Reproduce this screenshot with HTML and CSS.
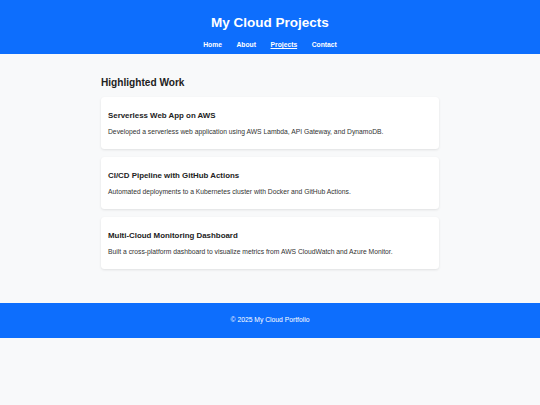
FILE: index.html
```html
<!DOCTYPE html>
<html lang="en">
<head>
<meta charset="utf-8">
<title>My Cloud Projects</title>
<link rel="stylesheet" href="styles.css">
</head>
<body>
<header class="site-header">
  <h1 class="site-title">My Cloud Projects</h1>
  <nav class="site-nav">
    <a class="nav-link" href="#">Home</a>
    <a class="nav-link" href="#">About</a>
    <a class="nav-link active" href="#">Projects</a>
    <a class="nav-link" href="#">Contact</a>
  </nav>
</header>
<main class="content">
  <h2 class="section-title">Highlighted Work</h2>
  <article class="card">
    <h3 class="card-title">Serverless Web App on AWS</h3>
    <p class="card-text">Developed a serverless web application using AWS Lambda, API Gateway, and DynamoDB.</p>
  </article>
  <article class="card">
    <h3 class="card-title">CI/CD Pipeline with GitHub Actions</h3>
    <p class="card-text">Automated deployments to a Kubernetes cluster with Docker and GitHub Actions.</p>
  </article>
  <article class="card">
    <h3 class="card-title">Multi-Cloud Monitoring Dashboard</h3>
    <p class="card-text">Built a cross-platform dashboard to visualize metrics from AWS CloudWatch and Azure Monitor.</p>
  </article>
</main>
<footer class="site-footer">
  <p class="footer-text">&copy; 2025 My Cloud Portfolio</p>
</footer>
</body>
</html>
```
FILE: styles.css
```css
html {
  background: #f8f9fa;
}
body {
  margin: 0;
  font-family: "Liberation Sans", Arial, sans-serif;
  background: #f8f9fa;
  color: #333;
  font-size: 6.75px;
}
.site-header {
  background: #0d6efd;
  color: #fff;
  text-align: center;
  padding: 15px 0 5px;
}
.site-title {
  font-size: 13.5px;
  line-height: 16px;
  margin: 0 0 10px;
}
.site-nav {
  display: flex;
  justify-content: center;
  gap: 14.5px;
  line-height: 8px;
}
.nav-link {
  color: #fff;
  font-weight: bold;
  text-decoration: none;
}
.nav-link.active {
  text-decoration: underline;
}
.content {
  max-width: 338px;
  margin: 0 auto;
  padding: 23px 0 26px;
}
.section-title {
  font-size: 10.125px;
  line-height: 12px;
  margin: 0 0 8px;
  color: #222;
}
.card {
  background: #fff;
  border-radius: 3.5px;
  box-shadow: 0 1px 2.5px rgba(0, 0, 0, 0.1);
  padding: 14px 7px 13px;
  margin-bottom: 8px;
}
.card-title {
  font-size: 7.9px;
  line-height: 10px;
  margin: 0 0 7px;
  color: #222;
}
.card-text {
  font-size: 6.75px;
  line-height: 8px;
  margin: 0;
}
.site-footer {
  background: #0d6efd;
  color: #fff;
  text-align: center;
  padding: 13.3px 0;
}
.footer-text {
  margin: 0;
  line-height: 8px;
}
```
